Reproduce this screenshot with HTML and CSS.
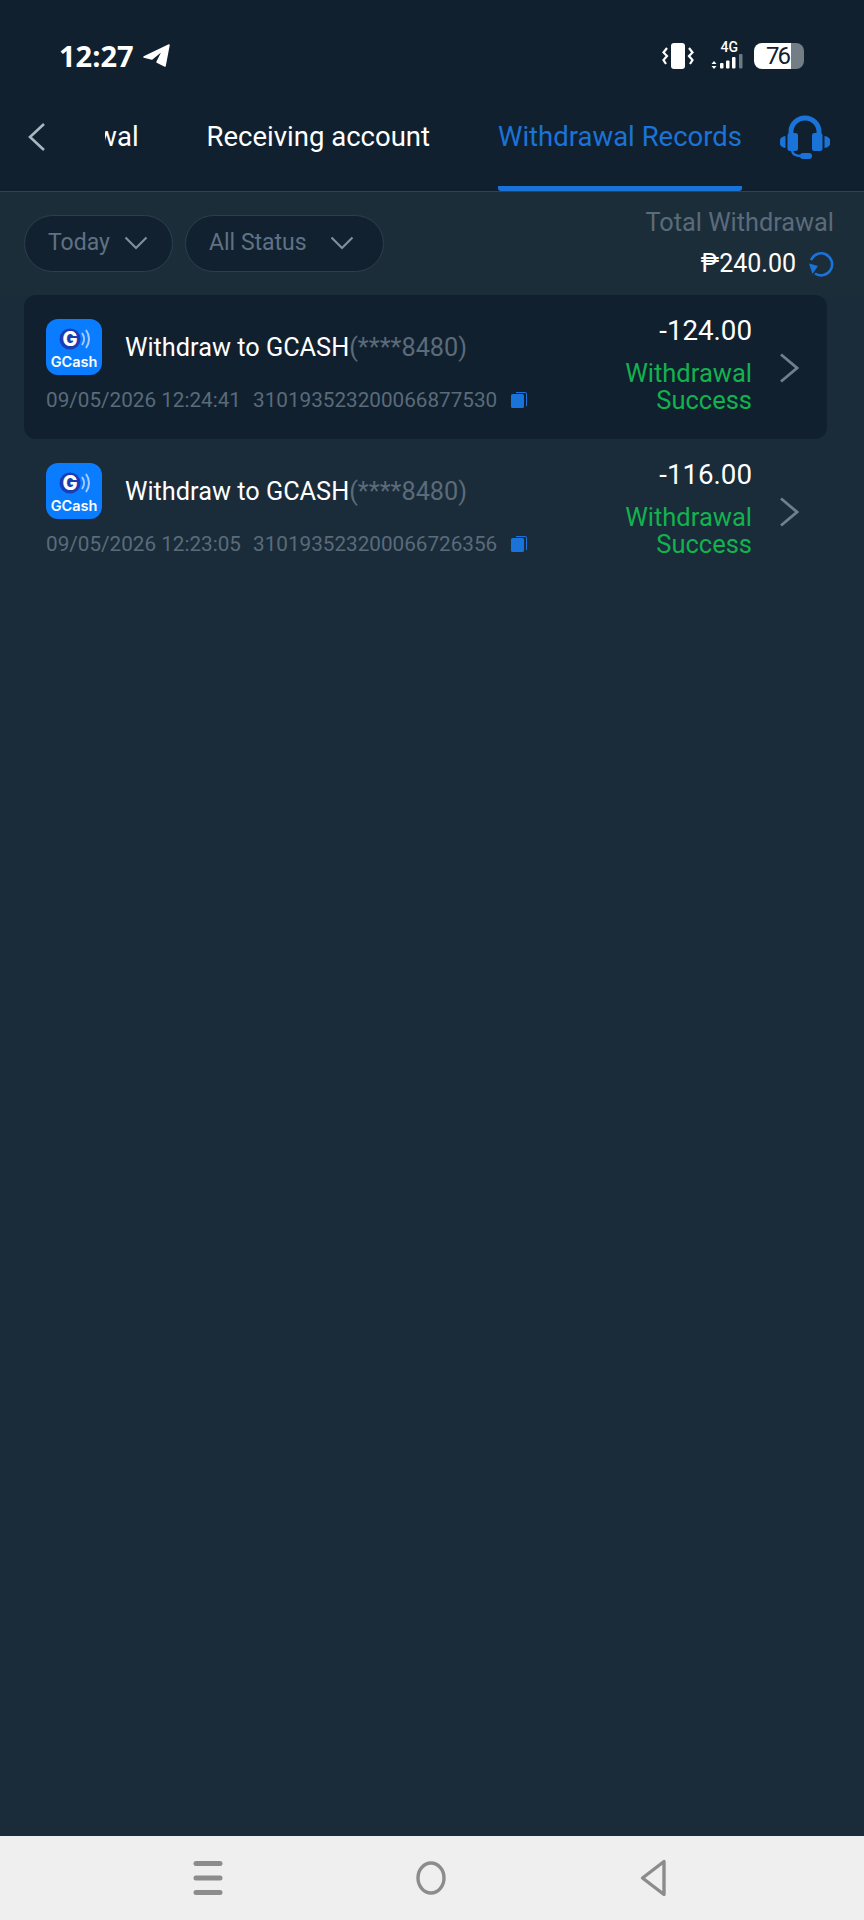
FILE: index.html
```html
<!DOCTYPE html>
<html lang="en">

<head>
    <meta charset="UTF-8">
    <meta name="viewport" content="width=device-width, initial-scale=1.0">
    <title>Withdrawal Records</title>
    <link rel="stylesheet" href="styles.css">
</head>

<body>

    <div class="app">
        <header class="top">
            <div class="statusbar">
                <div class="status-left">
                    <span class="clock">12:27</span>
                    <svg class="status-send" viewBox="0 0 27 24">
                        <path d="M1 13 26 1 22 22 14 18 20 6 9 15Z" fill="#fff" stroke="#fff" stroke-width="1.5" stroke-linejoin="round"/>
                    </svg>
                </div>
                <div class="status-right">
                    <svg class="status-vibrate" viewBox="0 0 32 26">
                        <rect x="9" y="0" width="14" height="26" rx="3" fill="#fff"/>
                        <path d="M5 5 1.500 9.500 5 13 1.500 17 4 21" fill="none" stroke="#fff" stroke-width="2.200"/>
                        <path d="M27 5 30.500 9.500 27 13 30.500 17 28 21" fill="none" stroke="#fff" stroke-width="2.200"/>
                    </svg>
                    <div class="status-signal">
                        <span class="signal-type">4G</span>
                        <svg class="signal-bars" viewBox="0 0 34 16">
                            <path d="M3 8 5.500 11H.5ZM3 16 .5 13H5.500Z" fill="#fff"/>
                            <rect x="9" y="10" width="3.500" height="5.500" rx="1" fill="#fff"/>
                            <rect x="15" y="7.500" width="3.500" height="8" rx="1" fill="#fff"/>
                            <rect x="21" y="4" width="3.500" height="11.500" rx="1" fill="#fff"/>
                            <rect x="28" y="1" width="3.500" height="14.500" rx="1" fill="#6d7a85"/>
                        </svg>
                    </div>
                    <div class="battery">
                        <span class="battery-level">76</span>
                        <span class="battery-rest"></span>
                    </div>
                </div>
            </div>

            <nav class="tabbar">
                <button class="icon-btn back-btn">
                    <svg viewBox="0 0 20 30" width="20" height="30">
                        <path d="M17 2 3 15 17 28" fill="none" stroke="#a9b6c2" stroke-width="2.600"/>
                    </svg>
                </button>
                <div class="tabs">
                    <a class="tab">Withdrawal</a>
                    <a class="tab">Receiving account</a>
                    <a class="tab tab-active">Withdrawal Records</a>
                </div>
                <button class="icon-btn help-btn">
                    <svg viewBox="0 0 50 44" width="50" height="44">
                        <path d="M11 22V17a14 14 0 0 1 28 0v5" fill="none" stroke="#1a73d9" stroke-width="5"/>
                        <rect x="7.500" y="18" width="10.500" height="18" rx="2.500" fill="#1a73d9"/>
                        <rect x="32" y="18" width="10.500" height="18" rx="2.500" fill="#1a73d9"/>
                        <path d="M5.500 21V33A6 6 0 0 1 5.500 21ZM44.500 21V33A6 6 0 0 0 44.500 21Z" fill="#1a73d9"/>
                        <path d="M12 36c1 4 4 5 9 5" fill="none" stroke="#1a73d9" stroke-width="2.500"/>
                        <rect x="20" y="38" width="12" height="6" rx="3" fill="#1a73d9"/>
                    </svg>
                </button>
            </nav>
        </header>

        <main class="content">
            <section class="filters">
                <div class="filter-group">
                    <button class="filter filter-today">
                        Today
                        <svg class="filter-arrow" viewBox="0 0 24 14"><path d="M1.500 1.500 12 12 22.500 1.500" fill="none" stroke="#7e8f9e" stroke-width="2.200"/></svg>
                    </button>
                    <button class="filter filter-status">
                        All Status
                        <svg class="filter-arrow" viewBox="0 0 24 14"><path d="M1.500 1.500 12 12 22.500 1.500" fill="none" stroke="#7e8f9e" stroke-width="2.200"/></svg>
                    </button>
                </div>
                <div class="total">
                    <div class="total-label">Total Withdrawal</div>
                    <div class="total-value">
                        <span>₱240.00</span>
                        <svg class="refresh" viewBox="0 0 26 26">
                            <path d="M3 9A11 11 0 1 1 7 22.500" fill="none" stroke="#1a73d9" stroke-width="2.600"/>
                            <path d="M1 12.500 10 15 4.500 23Z" fill="#1a73d9"/>
                        </svg>
                    </div>
                </div>
            </section>

            <section class="records">
                <article class="record record-active">
                    <div class="record-main">
                        <div class="record-title">
                            <svg class="gcash" viewBox="0 0 56 56">
                                <rect width="56" height="56" rx="12" fill="#0a7cff"/>
                                <circle cx="24" cy="20" r="10.500" fill="#1a3cb5"/>
                                <text class="gcash-g" x="24" y="27" text-anchor="middle">G</text>
                                <path d="M36 14a10 10 0 0 1 0 12M40 11a15 15 0 0 1 0 18" fill="none" stroke="#a9cdff" stroke-width="2"/>
                                <text class="gcash-name" x="28" y="47.500" text-anchor="middle">GCash</text>
                            </svg>
                            <span class="record-name">Withdraw to GCASH<span class="record-card">(****8480)</span></span>
                        </div>
                        <div class="record-meta">
                            <span class="record-time">09/05/2026 12:24:41</span>
                            <span class="record-no">310193523200066877530</span>
                            <svg class="copy" viewBox="0 0 16 16">
                                <path d="M5 0H14a2 2 0 0 1 2 2V14H15V2a1 1 0 0 0-1-1H5Z" fill="#1a73d9"/>
                                <rect x="0" y="2" width="13" height="14" rx="1.500" fill="#1a73d9"/>
                            </svg>
                        </div>
                    </div>
                    <div class="record-side">
                        <div class="record-amount">-124.00</div>
                        <div class="record-state">Withdrawal<br>Success</div>
                    </div>
                    <svg class="record-arrow" viewBox="0 0 20 30"><path d="M2 1.500 18 15 2 28.500" fill="none" stroke="#6f7f8d" stroke-width="2.800"/></svg>
                </article>

                <article class="record">
                    <div class="record-main">
                        <div class="record-title">
                            <svg class="gcash" viewBox="0 0 56 56">
                                <rect width="56" height="56" rx="12" fill="#0a7cff"/>
                                <circle cx="24" cy="20" r="10.500" fill="#1a3cb5"/>
                                <text class="gcash-g" x="24" y="27" text-anchor="middle">G</text>
                                <path d="M36 14a10 10 0 0 1 0 12M40 11a15 15 0 0 1 0 18" fill="none" stroke="#a9cdff" stroke-width="2"/>
                                <text class="gcash-name" x="28" y="47.500" text-anchor="middle">GCash</text>
                            </svg>
                            <span class="record-name">Withdraw to GCASH<span class="record-card">(****8480)</span></span>
                        </div>
                        <div class="record-meta">
                            <span class="record-time">09/05/2026 12:23:05</span>
                            <span class="record-no">310193523200066726356</span>
                            <svg class="copy" viewBox="0 0 16 16">
                                <path d="M5 0H14a2 2 0 0 1 2 2V14H15V2a1 1 0 0 0-1-1H5Z" fill="#1a73d9"/>
                                <rect x="0" y="2" width="13" height="14" rx="1.500" fill="#1a73d9"/>
                            </svg>
                        </div>
                    </div>
                    <div class="record-side">
                        <div class="record-amount">-116.00</div>
                        <div class="record-state">Withdrawal<br>Success</div>
                    </div>
                    <svg class="record-arrow" viewBox="0 0 20 30"><path d="M2 1.500 18 15 2 28.500" fill="none" stroke="#6f7f8d" stroke-width="2.800"/></svg>
                </article>
            </section>
        </main>

        <footer class="navbar">
            <svg class="nav-icon" viewBox="0 0 40 40">
                <path d="M8 5.500H32M8 20H32M8 34.500H32" fill="none" stroke="#8c8c8c" stroke-width="5" stroke-linecap="round"/>
            </svg>
            <svg class="nav-icon" viewBox="0 0 40 40">
                <ellipse cx="20" cy="20" rx="13" ry="15" fill="none" stroke="#8c8c8c" stroke-width="3.400"/>
            </svg>
            <svg class="nav-icon" viewBox="0 0 40 40">
                <path d="M30 3.500V36.500L8.500 20Z" fill="none" stroke="#8c8c8c" stroke-width="3.400" stroke-linejoin="round"/>
            </svg>
        </footer>
    </div>

</body>

</html>
```

FILE: styles.css
```css
* {
    box-sizing: border-box;
}

body {
    margin: 0;
    font-family: Roboto, "Liberation Sans", sans-serif;
    background-color: #1a2b39;
    color: #fff;
}

.app {
    display: flex;
    flex-direction: column;
    width: 864px;
    height: 1920px;
    overflow: hidden;
}

/* Header */
.top {
    background-color: #11202e;
    border-bottom: 1px solid #31424f;
}

.statusbar {
    display: flex;
    justify-content: space-between;
    align-items: center;
    height: 87px;
    padding: 24px 60px 0 59px;
}

.status-left,
.status-right {
    display: flex;
    align-items: center;
}

.clock {
    font-family: "Open Sans", sans-serif;
    font-size: 29px;
    font-weight: 700;
}

.status-send {
    width: 27px;
    height: 24px;
    margin-left: 9px;
}

.status-vibrate {
    width: 32px;
    height: 26px;
}

.status-signal {
    display: flex;
    flex-direction: column;
    align-items: flex-end;
    width: 34px;
    margin-left: 17px;
}

.signal-type {
    font-size: 14px;
    font-weight: 500;
    line-height: 11px;
    margin-right: 7px;
}

.signal-bars {
    width: 34px;
    height: 16px;
}

.battery {
    display: flex;
    width: 50px;
    height: 26px;
    margin-left: 9px;
}

.battery-level {
    width: 37px;
    padding-left: 12px;
    background-color: #fff;
    border-radius: 8px 0 0 8px;
    color: #11202e;
    font-size: 24px;
    line-height: 26px;
    letter-spacing: -2px;
}

.battery-rest {
    width: 13px;
    background-color: #727d86;
    border-radius: 0 8px 8px 0;
}

.tabbar {
    display: flex;
    align-items: stretch;
    height: 104px;
}

.icon-btn {
    display: flex;
    align-items: center;
    background: none;
    border: 0;
    padding: 0;
}

.back-btn {
    width: 105px;
    padding: 0 0 5px 27px;
    flex: none;
}

/* tab strip is scrolled to its end, so the first tab is cut off on the left */
.tabs {
    display: flex;
    justify-content: flex-end;
    gap: 68px;
    flex: 1;
    min-width: 0;
    overflow: hidden;
    padding-right: 27px;
}

.tab {
    flex: none;
    padding-top: 30px;
    color: #fff;
    font-size: 27.500px;
    line-height: 40px;
    white-space: nowrap;
}

.tab-active {
    color: #1a73d9;
    border-bottom: 5px solid #1a73d9;
    border-radius: 0 0 3px 3px;
}

.help-btn {
    width: 95px;
    padding: 0 0 5px 11px;
    flex: none;
}

/* Filters + total */
.content {
    flex: 1;
}

.filters {
    display: flex;
    justify-content: space-between;
    align-items: flex-start;
    padding: 15px 30px 0 24px;
    height: 103px;
    background-color: #1c2d3a;
}

.filter-group {
    display: flex;
    gap: 12px;
    padding-top: 8px;
}

.filter {
    display: flex;
    justify-content: space-between;
    align-items: center;
    height: 57px;
    padding: 0 24px 2px 23px;
    background-color: #12212f;
    border: 1px solid #2c3f4e;
    border-radius: 29px;
    color: #5f7284;
    font-family: inherit;
    font-size: 23px;
}

.filter-today {
    width: 149px;
}

.filter-status {
    width: 199px;
    padding-right: 29px;
}

.filter-arrow {
    width: 24px;
    height: 14px;
}

.total {
    text-align: right;
}

.total-label {
    color: #5a6b7a;
    font-size: 25.300px;
    line-height: 32px;
}

.total-value {
    display: flex;
    justify-content: flex-end;
    align-items: center;
    gap: 12px;
    margin-top: 9px;
    font-size: 25px;
    line-height: 32px;
}

.refresh {
    width: 26px;
    height: 26px;
}

/* Record list */
.records {
    padding: 0 37px 0 24px;
}

.record {
    display: flex;
    align-items: flex-start;
    height: 144px;
    padding: 24px 28px 0 22px;
    border-radius: 12px;
}

.record-active {
    background-color: #11202e;
}

.record-main {
    flex: 1;
}

.record-title {
    display: flex;
    align-items: center;
    gap: 23px;
}

.gcash {
    width: 56px;
    height: 56px;
}

.gcash-g {
    fill: #fff;
    font-family: Inter, sans-serif;
    font-size: 20px;
    font-weight: 800;
}

.gcash-name {
    fill: #fff;
    font-family: Inter, sans-serif;
    font-size: 14.500px;
    font-weight: 600;
}

.record-name {
    font-size: 25.300px;
}

.record-card {
    color: #5a6b7a;
}

.record-meta {
    display: flex;
    align-items: center;
    margin-top: 12px;
    color: #5a6b7a;
    font-size: 20.700px;
    line-height: 26px;
}

.record-no {
    margin-left: 12px;
}

.copy {
    width: 16px;
    height: 16px;
    margin-left: 14px;
}

.record-side {
    margin-top: -4px;
    text-align: right;
}

.record-amount {
    font-size: 27.700px;
    line-height: 32px;
    margin-bottom: 13px;
}

.record-state {
    color: #12b24f;
    font-size: 25.500px;
    line-height: 27px;
}

.record-arrow {
    flex: none;
    width: 20px;
    height: 30px;
    margin: 34px 0 0 27px;
}

/* Android nav bar */
.navbar {
    display: flex;
    justify-content: space-between;
    align-items: center;
    height: 84px;
    padding: 0 190px 0 188px;
    background-color: #efefef;
}

.nav-icon {
    width: 40px;
    height: 40px;
}
```
